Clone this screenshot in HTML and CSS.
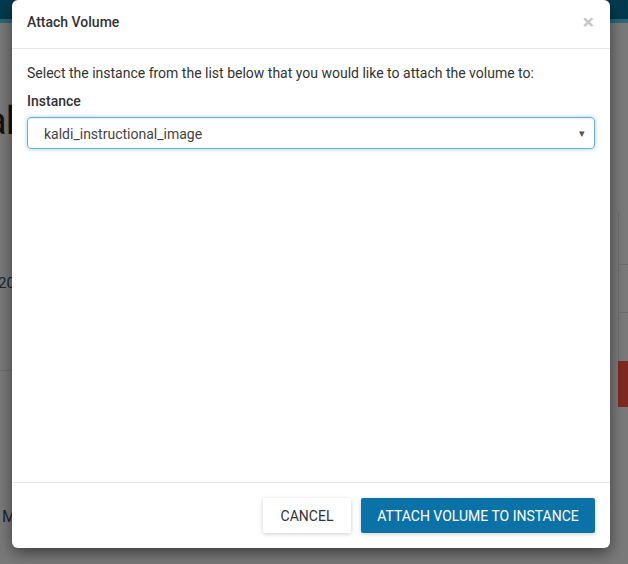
FILE: index.html
```html
<!DOCTYPE html>
<html>
<head>
<meta charset="utf-8">
<link rel="stylesheet" href="styles.css">
</head>
<body>
<div class="page">
  <div class="topbar"></div>
  <div class="topstrip"></div>
  <div class="content">
    <div class="left-col">
      <div class="big">al</div>
      <div class="num">20</div>
      <div class="hline"></div>
      <div class="letter">M</div>
    </div>
    <div class="right-col">
      <div class="cell c1"></div>
      <div class="cell c2"></div>
      <div class="cell c3"></div>
      <div class="redbtn"></div>
    </div>
  </div>
</div>

<div class="modal">
  <div class="modal-header">
    <h4 class="modal-title">Attach Volume</h4>
    <span class="close">×</span>
  </div>
  <div class="modal-body">
    <p class="intro">Select the instance from the list below that you would like to attach the volume to:</p>
    <label class="label">Instance</label>
    <div class="select">
      <span class="select-text">kaldi_instructional_image</span>
      <span class="caret">▾</span>
    </div>
  </div>
  <div class="modal-footer">
    <button class="btn btn-default">CANCEL</button>
    <button class="btn btn-primary">ATTACH VOLUME TO INSTANCE</button>
  </div>
</div>
</body>
</html>
```

FILE: styles.css
```css
html, body {
  margin: 0;
  padding: 0;
}
body {
  width: 628px;
  height: 564px;
  overflow: hidden;
  background: #7a7a7a;
  font-family: Roboto, "Liberation Sans", sans-serif;
  position: relative;
}
.page {
  height: 564px;
}
.topbar {
  height: 19px;
  background: #043a50;
}
.topstrip {
  height: 4px;
  background: #2a6977;
}
.content {
  display: flex;
  justify-content: space-between;
}
.left-col {
  width: 12px;
  overflow: hidden;
  color: #111;
}
.big {
  margin-top: 78px;
  margin-left: -14px;
  font-size: 38px;
  line-height: 40px;
  letter-spacing: -1px;
  white-space: nowrap;
}
.num {
  margin-top: 132px;
  font-size: 15px;
  line-height: 20px;
  color: #1c2636;
  margin-left: -2px;
}
.hline {
  margin-top: 77px;
  height: 1px;
  background: #6e6e6e;
}
.letter {
  margin-top: 136px;
  font-size: 16px;
  line-height: 20px;
  color: #1c2636;
  margin-left: 2px;
}
.right-col {
  width: 10px;
  padding-top: 190px;
}
.cell {
  border-left: 1px solid #6c6c6c;
}
.c1 { height: 51px; border-bottom: 1px solid #6c6c6c; }
.c2 { height: 47px; border-bottom: 1px solid #6c6c6c; }
.c3 { height: 48px; }
.redbtn {
  height: 46px;
  background: #7e2a22;
}

.modal {
  position: absolute;
  left: 12px;
  top: 0;
  width: 598px;
  height: 548px;
  background: #fff;
  border-radius: 6px;
  box-shadow: 0 5px 15px rgba(0, 0, 0, 0.5);
  display: flex;
  flex-direction: column;
  box-sizing: border-box;
  color: #333;
}
.modal-header {
  height: 49px;
  box-sizing: border-box;
  border-bottom: 1px solid #e5e5e5;
  display: flex;
  align-items: flex-start;
  justify-content: space-between;
  padding: 13px 15px 0;
  flex: none;
}
.modal-title {
  margin: 0;
  font-size: 14px;
  line-height: 18px;
  font-weight: 500;
  color: #333;
}
.close {
  font-size: 21px;
  font-weight: 700;
  color: #c8c8c8;
  line-height: 18px;
  margin-right: 1px;
}
.modal-body {
  flex: 1;
  padding: 14px 15px 0;
}
.intro {
  margin: 0 0 8px;
  font-size: 14px;
  line-height: 20px;
  color: #333;
}
.label {
  display: block;
  font-size: 14px;
  font-weight: 500;
  line-height: 20px;
  color: #333;
  margin-bottom: 6px;
}
.select {
  height: 32px;
  border: 1px solid #66afe9;
  border-radius: 4px;
  box-shadow: inset 0 1px 1px rgba(0, 0, 0, 0.075), 0 0 4px rgba(102, 175, 233, 0.6);
  display: flex;
  align-items: center;
  justify-content: space-between;
  padding: 1px 9px 0 16px;
  box-sizing: border-box;
  font-size: 14px;
  color: #444;
}
.caret {
  font-size: 11px;
  color: #555;
}
.modal-footer {
  flex: none;
  height: 66px;
  border-top: 1px solid #e5e5e5;
  box-sizing: border-box;
  display: flex;
  justify-content: flex-end;
  align-items: flex-start;
  padding: 15px 15px 0;
  gap: 10px;
}
.btn {
  height: 35px;
  border: none;
  border-radius: 2px;
  font-family: Roboto, "Liberation Sans", sans-serif;
  font-size: 14px;
  padding: 0 16px;
  cursor: pointer;
}
.btn-default {
  background: #fff;
  color: #333;
  width: 88px;
  box-shadow: 0 1px 4px rgba(0, 0, 0, 0.2);
}
.btn-primary {
  background: #0b72a8;
  color: #fff;
  width: 234px;
  box-shadow: 0 1px 4px rgba(0, 0, 0, 0.2);
}
```
